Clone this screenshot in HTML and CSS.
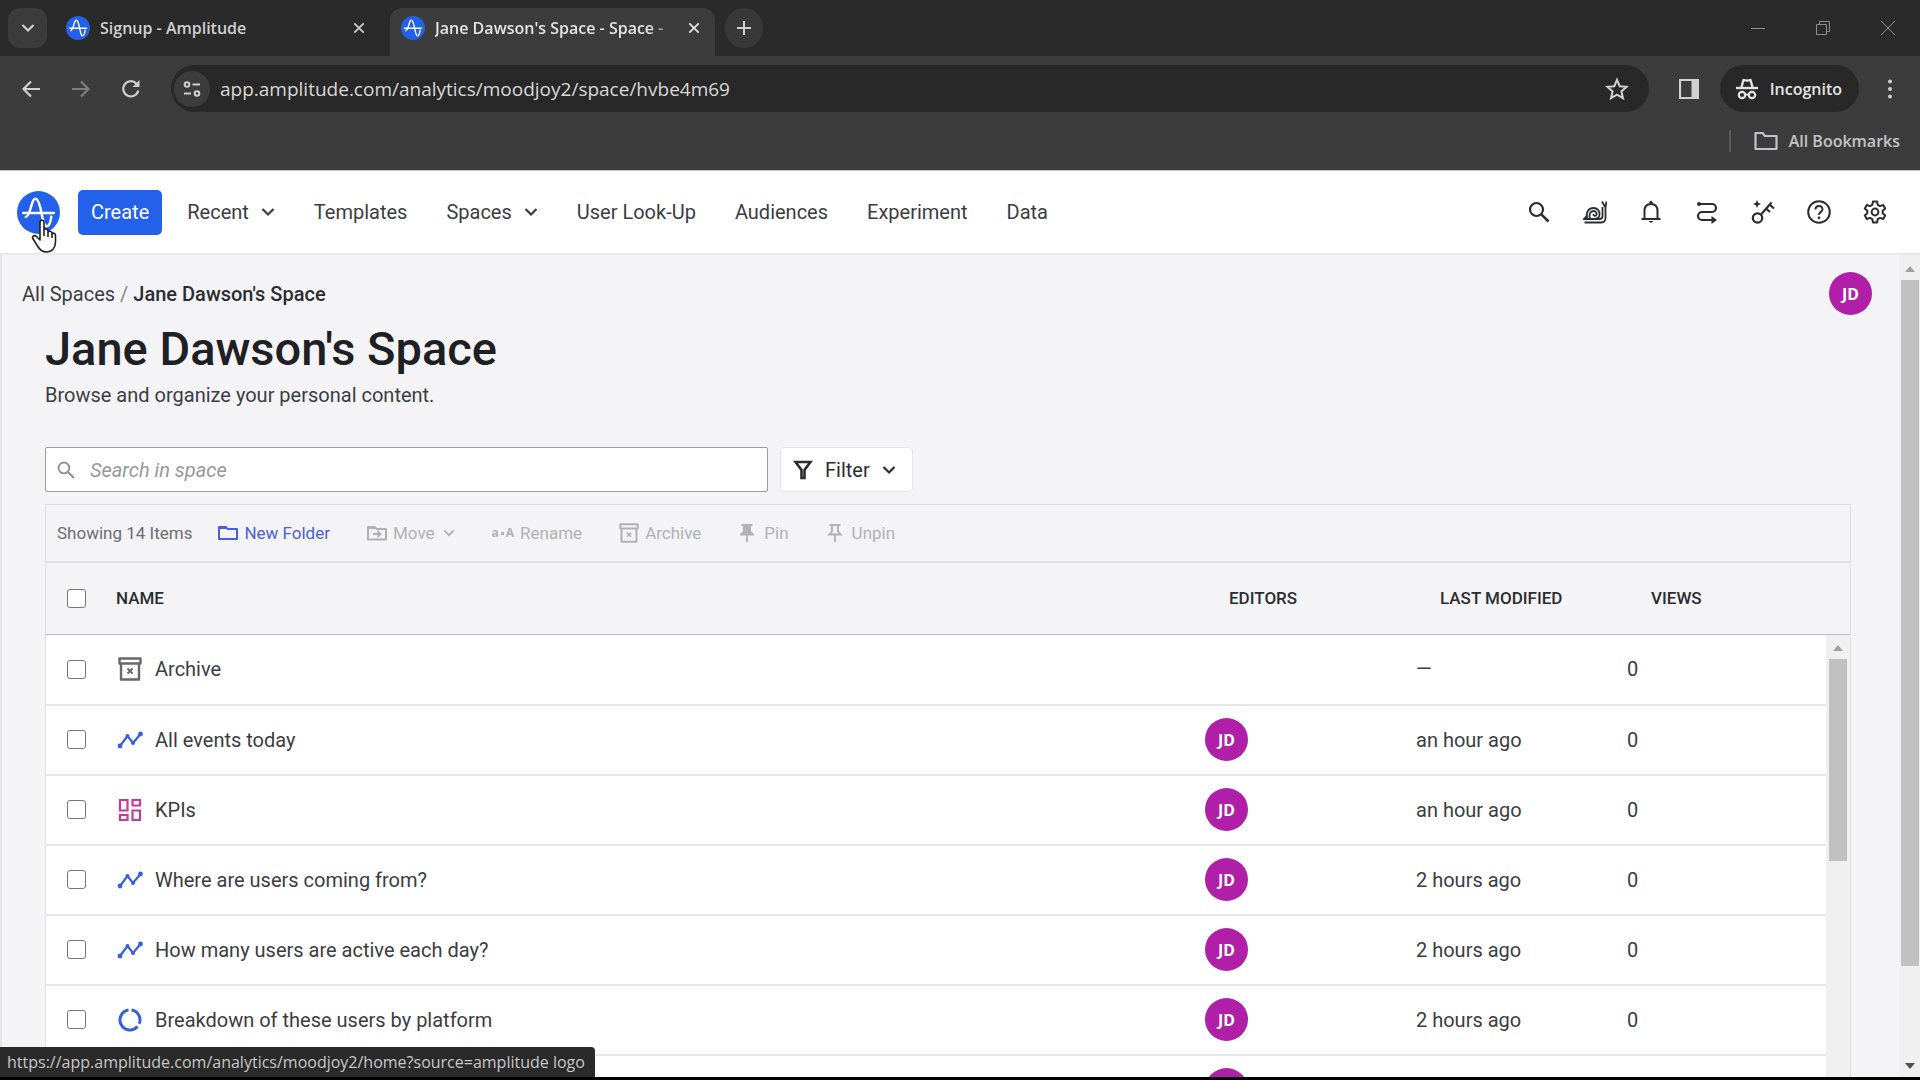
FILE: index.html
```html
<!DOCTYPE html>
<html lang="en">
<head>
<meta charset="utf-8">
<meta name="viewport" content="width=device-width, initial-scale=1">
<title>Jane Dawson's Space - Space</title>
<link rel="stylesheet" href="styles.css">
</head>
<body>
<svg class="sprite" aria-hidden="true">
  <symbol id="amp" viewBox="0 0 42 42">
    <circle cx="21" cy="21" r="21" fill="#2461eb"/>
    <path d="M6 21.5H36M8.500 25.500C11 25 12.500 20 14 14.500C15.300 9.500 16.500 7.500 18 7.500C20.500 7.500 22.500 14 24 22C25.500 30 27 34.500 29 34.500C31.500 34.500 33 29 33.500 25" fill="none" stroke="#fff" stroke-width="2.400" stroke-linecap="round"/>
  </symbol>
  <symbol id="chev" viewBox="0 0 14 14"><path d="M1.500 4L7 9.500L12.500 4" fill="none" stroke="currentColor" stroke-width="2.200"/></symbol>
  <symbol id="x" viewBox="0 0 14 14"><path d="M1.500 1.500L12.500 12.500M12.500 1.500L1.500 12.500" fill="none" stroke="currentColor" stroke-width="2"/></symbol>
  <symbol id="search" viewBox="0 0 24 24"><circle cx="9.500" cy="9.500" r="6.500" fill="none" stroke="currentColor" stroke-width="2.200"/><path d="M14.300 14.300L21.500 21.500" stroke="currentColor" stroke-width="2.600" fill="none"/></symbol>
  <symbol id="folder" viewBox="0 0 20 16"><path d="M1 14V2H8L9.500 4H19V14Z" fill="none" stroke="currentColor" stroke-width="2" stroke-linejoin="round"/><path d="M1 1.500H8L10 4H1Z" fill="currentColor"/></symbol>
  <symbol id="archive" viewBox="0 0 24 24"><path d="M1.500 1.500H22.500V6.500H1.500ZM3 6.500V22.500H21V6.500" fill="none" stroke="currentColor" stroke-width="2.400" stroke-linejoin="round"/><path d="M9.500 11.500L14.500 16.500M14.500 11.500L9.500 16.500" stroke="currentColor" stroke-width="2"/></symbol>
  <symbol id="line" viewBox="0 0 26 18"><path d="M3 15L10.500 5L16 12L23.500 3" fill="none" stroke="currentColor" stroke-width="2.200"/><circle cx="3" cy="15" r="2.400" fill="currentColor"/><circle cx="10.500" cy="5" r="2" fill="currentColor"/><circle cx="16" cy="12" r="2" fill="currentColor"/><circle cx="23.500" cy="3" r="2.400" fill="currentColor"/></symbol>
  <symbol id="dash" viewBox="0 0 24 24"><path d="M2 2H9.500V12.500H2ZM14.500 2H22V7.500H14.500ZM2 17H9.500V22H2ZM14.500 12.500H22V22H14.500Z" fill="none" stroke="currentColor" stroke-width="2.200"/></symbol>
  <symbol id="ring" viewBox="0 0 24 24"><path d="M10.500 2.100A10 10 0 1 0 19.500 18.600M13.500 2.100A10 10 0 0 1 21.200 15.800" fill="none" stroke="currentColor" stroke-width="3"/></symbol>
</svg>

<div class="browser">
  <div class="tabstrip">
    <button class="tab-search" aria-label="Search tabs"><svg class="i14"><use href="#chev"/></svg></button>
    <div class="tab">
      <svg class="favicon"><use href="#amp"/></svg><span class="tab-title">Signup - Amplitude</span>
      <button class="plain" aria-label="Close tab"><svg class="i12"><use href="#x"/></svg></button>
    </div>
    <div class="tab tab-active">
      <svg class="favicon"><use href="#amp"/></svg><span class="tab-title">Jane Dawson's Space - Space -</span>
      <button class="plain" aria-label="Close tab"><svg class="i12"><use href="#x"/></svg></button>
    </div>
    <button class="new-tab" aria-label="New tab"><svg class="i14" viewBox="0 0 14 14"><path d="M7 0V14M0 7H14" stroke="currentColor" stroke-width="2"/></svg></button>
    <div class="window-controls">
      <button class="plain" aria-label="Minimize"><svg class="i16" viewBox="0 0 16 16"><path d="M1 8.500H15" stroke="currentColor"/></svg></button>
      <button class="plain" aria-label="Restore"><svg class="i16" viewBox="0 0 16 16"><path d="M1.500 4.500H11.500V14.500H1.500ZM4.500 4.500V1.500H14.500V11.500H11.500" fill="none" stroke="currentColor"/></svg></button>
      <button class="plain" aria-label="Close"><svg class="i16" viewBox="0 0 16 16"><path d="M1 1L15 15M15 1L1 15" stroke="currentColor"/></svg></button>
    </div>
  </div>
  <div class="toolbar">
    <button class="plain" aria-label="Back"><svg class="i20" viewBox="0 0 20 20"><path d="M19 10H3M10 2.500L2.500 10L10 17.500" fill="none" stroke="currentColor" stroke-width="2.200"/></svg></button>
    <button class="plain dim" aria-label="Forward"><svg class="i20" viewBox="0 0 20 20"><path d="M1 10H17M10 2.500L17.500 10L10 17.500" fill="none" stroke="currentColor" stroke-width="2.200"/></svg></button>
    <button class="plain" aria-label="Reload"><svg class="i20" viewBox="0 0 20 20"><path d="M17.300 11.500A7.600 7.600 0 1 1 15.500 4.700L17 6.300" fill="none" stroke="currentColor" stroke-width="2.200"/><path d="M18.500 1V8H11.500Z" fill="currentColor"/></svg></button>
    <div class="omnibox">
      <button class="site" aria-label="Site information"><svg class="i18" viewBox="0 0 18 18"><path d="M9.500 4.500H17M1 13.500H8" stroke="currentColor" stroke-width="2.200"/><circle cx="4" cy="4.500" r="2.300" fill="none" stroke="currentColor" stroke-width="2"/><circle cx="14" cy="13.500" r="2.300" fill="none" stroke="currentColor" stroke-width="2"/></svg></button>
      <input class="url" type="text" aria-label="Address" value="app.amplitude.com/analytics/moodjoy2/space/hvbe4m69">
      <button class="plain" aria-label="Bookmark"><svg class="i24" viewBox="0 0 24 24"><path d="M12 2.800L14.700 9.200L21.600 9.800L16.400 14.400L18 21.200L12 17.600L6 21.200L7.600 14.400L2.400 9.800L9.300 9.200Z" fill="none" stroke="currentColor" stroke-width="2"/></svg></button>
    </div>
    <button class="plain" aria-label="Side panel"><svg class="i20" viewBox="0 0 20 20"><path d="M1 1H19V19H1Z" fill="none" stroke="currentColor" stroke-width="2.200"/><path d="M12.500 1H19V19H12.500Z" fill="currentColor"/></svg></button>
    <button class="incognito"><svg class="i22" viewBox="0 0 22 22"><path d="M0 10H22" stroke="currentColor" stroke-width="2.400"/><path d="M5.500 9L7.500 2L11 2.600L14.500 2L16.500 9" fill="none" stroke="currentColor" stroke-width="2.400"/><circle cx="6" cy="17" r="3.200" fill="none" stroke="currentColor" stroke-width="2.200"/><circle cx="16" cy="17" r="3.200" fill="none" stroke="currentColor" stroke-width="2.200"/><path d="M9 16.500H13" stroke="currentColor" stroke-width="2"/></svg>Incognito</button>
    <button class="plain" aria-label="Browser menu"><svg class="i20" viewBox="0 0 20 20" fill="currentColor"><circle cx="10" cy="2.500" r="2"/><circle cx="10" cy="10" r="2"/><circle cx="10" cy="17.500" r="2"/></svg></button>
  </div>
  <div class="bookmarks">
    <span class="divider"></span>
    <button class="plain bookmark"><svg class="bm-folder" viewBox="0 0 24 20"><path d="M1.500 18V2H8.500L11 5H22.500V18Z" fill="none" stroke="currentColor" stroke-width="2.200" stroke-linejoin="round"/></svg>All Bookmarks</button>
  </div>
</div>

<header class="app-header">
  <a class="logo" href="#" aria-label="Amplitude home">
    <svg class="logo-mark"><use href="#amp"/></svg>
    <svg class="cursor" viewBox="0 0 26 34" aria-hidden="true"><path d="M9 20V3.500C9 .5 13 .5 13 3.500V11C13 9.500 17 9.500 17 12V13C17.500 11.500 21 12 21 14V15C21.500 13.500 24.500 14 24.500 16.500V23C24.500 29 21 33 15.500 33C10.500 33 8.500 30.500 6.500 27L1.800 19.500C.8 17.500 3.500 15.500 5.500 17.500L9 21Z" fill="#fff" stroke="#222" stroke-width="1.600" stroke-linejoin="round"/><path d="M13 11V17M17 13V18M21 15V19" stroke="#222" stroke-width="1.600"/></svg>
  </a>
  <button class="create">Create</button>
  <nav class="nav">
    <button class="nav-item">Recent <svg class="i14"><use href="#chev"/></svg></button>
    <a class="nav-item" href="#">Templates</a>
    <button class="nav-item">Spaces <svg class="i14"><use href="#chev"/></svg></button>
    <a class="nav-item" href="#">User Look-Up</a>
    <a class="nav-item" href="#">Audiences</a>
    <a class="nav-item" href="#">Experiment</a>
    <a class="nav-item" href="#">Data</a>
  </nav>
  <div class="tools">
    <button class="plain" aria-label="Search"><svg class="i24"><use href="#search"/></svg></button>
    <button class="plain" aria-label="Snail"><svg class="i24" viewBox="0 0 24 24"><path d="M1.500 22.500H18C21 22.500 22.500 21 22.500 18V7.500L19 1.500M22.500 7L23.500 1.500M19.500 7V16C19.500 18.500 18 19 16.500 19H1L3.500 16.500" fill="none" stroke="currentColor" stroke-width="1.800"/><path d="M4 18.500C2.500 12 6 8 10.500 8C14.500 8 16.800 11 16.500 14.500C16.300 17 14.500 18.500 12.500 18.500M7 18.500C5.500 14 7.500 11 10.500 11C13 11 14 13 13.500 14.500C13 16.500 10 16 10.500 14" fill="none" stroke="currentColor" stroke-width="1.800"/></svg></button>
    <button class="plain" aria-label="Notifications"><svg class="i24" viewBox="0 0 24 24"><path d="M5.500 18.500V11C5.500 6.500 8 4 12 4S18.500 6.500 18.500 11V18.500" fill="none" stroke="currentColor" stroke-width="2"/><path d="M2.500 19H21.500" stroke="currentColor" stroke-width="2"/><circle cx="12" cy="2.500" r="1.700" fill="currentColor"/><path d="M9.500 21H14.500Q12 24.500 9.500 21Z" fill="currentColor"/></svg></button>
    <button class="plain" aria-label="Journeys"><svg class="i24" viewBox="0 0 24 24"><path d="M3.500 4H17A4 4 0 0 1 17 12H7A4 4 0 0 0 7 20H18" fill="none" stroke="currentColor" stroke-width="2.200"/><circle cx="4" cy="4" r="2" fill="currentColor"/><path d="M16.500 16L22 20L16.500 24Z" fill="currentColor"/></svg></button>
    <button class="plain" aria-label="Keys"><svg class="i24" viewBox="0 0 24 24"><circle cx="6.500" cy="18" r="4.700" fill="none" stroke="currentColor" stroke-width="2.200"/><path d="M10 14.500L20.500 2.500M15 8.500L19 12M18.500 4.500L23 8.500" fill="none" stroke="currentColor" stroke-width="2.200"/><path d="M6 0L7.200 2.800L10 4L7.200 5.200L6 8L4.800 5.200L2 4L4.800 2.800Z" fill="currentColor"/></svg></button>
    <button class="plain" aria-label="Help"><svg class="i24" viewBox="0 0 24 24"><circle cx="12" cy="12" r="10.800" fill="none" stroke="currentColor" stroke-width="2"/><path d="M8.500 9.500C8.500 4.800 15.500 4.800 15.500 9.200C15.500 11.800 12 12 12 14.800" fill="none" stroke="currentColor" stroke-width="2"/><circle cx="12" cy="17.800" r="1.400" fill="currentColor"/></svg></button>
    <button class="plain" aria-label="Settings"><svg class="i24" viewBox="0 0 24 24"><circle cx="12" cy="12" r="3.400" fill="none" stroke="currentColor" stroke-width="2"/><path d="M10 1.500H14L14.700 4.800L17 6.100L20.200 5L22.200 8.500L19.700 10.800V13.200L22.200 15.500L20.200 19L17 17.900L14.700 19.200L14 22.500H10L9.300 19.200L7 17.900L3.800 19L1.800 15.500L4.300 13.200V10.800L1.800 8.500L3.800 5L7 6.100L9.300 4.800Z" fill="none" stroke="currentColor" stroke-width="2" stroke-linejoin="round"/></svg></button>
  </div>
</header>

<div class="page">
  <main class="content">
    <div class="crumb-row">
      <div class="crumbs"><a href="#">All Spaces</a> <span class="slash">/</span> <span class="current">Jane Dawson's Space</span></div>
      <span class="avatar">JD</span>
    </div>
    <h1>Jane Dawson's Space</h1>
    <p class="subtitle">Browse and organize your personal content.</p>
    <div class="controls">
      <label class="search-box"><svg class="i20"><use href="#search"/></svg><input type="text" placeholder="Search in space" aria-label="Search in space"></label>
      <button class="filter"><svg class="i20" viewBox="0 0 20 20"><path d="M2.500 2H17.500L11.500 10V18H8.500V10Z" fill="none" stroke="currentColor" stroke-width="2.600"/></svg>Filter<svg class="i14"><use href="#chev"/></svg></button>
    </div>

    <section class="card">
      <div class="actions">
        <span class="count">Showing 14 Items</span>
        <button class="action action-new"><svg class="act-folder"><use href="#folder"/></svg>New Folder</button>
        <button class="action" disabled><svg class="act-folder" viewBox="0 0 20 16"><path d="M1 14.500V2H8L9.500 4H19V14.500Z" fill="none" stroke="currentColor" stroke-width="2" stroke-linejoin="round"/><path d="M1 1.500H8L10 4H1Z" fill="currentColor"/><path d="M6 9H13M10.500 6L13.500 9L10.500 12" fill="none" stroke="currentColor" stroke-width="1.800"/></svg>Move<svg class="i12 move-chev"><use href="#chev"/></svg></button>
        <button class="action" disabled><span class="case-icon" aria-hidden="true">a<i></i>A</span>Rename</button>
        <button class="action" disabled><svg class="i20"><use href="#archive"/></svg>Archive</button>
        <button class="action pin" disabled><svg class="i18" viewBox="0 0 18 18"><path d="M3.500 0H14.500V2H13V7.500L16 10V11.500H2V10L5 7.500V2H3.500Z" fill="currentColor"/><path d="M9 11V18" stroke="currentColor" stroke-width="1.800"/></svg>Pin</button>
        <button class="action pin" disabled><svg class="i18" viewBox="0 0 18 18"><path d="M3.500 1H14.500M6 1V7.500L3.200 10.500H14.800L12 7.500V1M9 11V18" fill="none" stroke="currentColor" stroke-width="1.800"/></svg>Unpin</button>
      </div>
      <table class="grid grid-head">
        <thead><tr>
          <th class="c-check"><input type="checkbox" aria-label="Select all"></th>
          <th>NAME</th><th class="c-side">EDITORS</th><th class="c-side">LAST MODIFIED</th><th class="c-views">VIEWS</th>
        </tr></thead>
      </table>
      <div class="rows">
        <table class="grid grid-body">
          <tbody>
            <tr><td class="c-check"><input type="checkbox" aria-label="Select Archive"></td><td><a class="item" href="#"><svg class="i26 grey"><use href="#archive"/></svg>Archive</a></td><td class="c-side"></td><td class="c-side">—</td><td class="c-views">0</td></tr>
            <tr><td class="c-check"><input type="checkbox" aria-label="Select All events today"></td><td><a class="item" href="#"><svg class="i26 blue"><use href="#line"/></svg>All events today</a></td><td class="c-side"><span class="avatar">JD</span></td><td class="c-side">an hour ago</td><td class="c-views">0</td></tr>
            <tr><td class="c-check"><input type="checkbox" aria-label="Select KPIs"></td><td><a class="item" href="#"><svg class="i26 pink"><use href="#dash"/></svg>KPIs</a></td><td class="c-side"><span class="avatar">JD</span></td><td class="c-side">an hour ago</td><td class="c-views">0</td></tr>
            <tr><td class="c-check"><input type="checkbox" aria-label="Select Where are users coming from?"></td><td><a class="item" href="#"><svg class="i26 blue"><use href="#line"/></svg>Where are users coming from?</a></td><td class="c-side"><span class="avatar">JD</span></td><td class="c-side">2 hours ago</td><td class="c-views">0</td></tr>
            <tr><td class="c-check"><input type="checkbox" aria-label="Select How many users are active each day?"></td><td><a class="item" href="#"><svg class="i26 blue"><use href="#line"/></svg>How many users are active each day?</a></td><td class="c-side"><span class="avatar">JD</span></td><td class="c-side">2 hours ago</td><td class="c-views">0</td></tr>
            <tr><td class="c-check"><input type="checkbox" aria-label="Select Breakdown of these users by platform"></td><td><a class="item" href="#"><svg class="i26 blue"><use href="#ring"/></svg>Breakdown of these users by platform</a></td><td class="c-side"><span class="avatar">JD</span></td><td class="c-side">2 hours ago</td><td class="c-views">0</td></tr>
            <tr><td class="c-check"></td><td></td><td class="c-side"><span class="avatar"></span></td><td class="c-side"></td><td class="c-views"></td></tr>
          </tbody>
        </table>
        <div class="scroll scroll-inner" aria-hidden="true"><i class="up"></i><span class="thumb"></span></div>
      </div>
    </section>
  </main>
  <div class="scroll scroll-page" aria-hidden="true"><i class="up"></i><span class="thumb"></span><i class="down"></i></div>
</div>
<div class="status">https://app.amplitude.com/analytics/moodjoy2/home?source=amplitude logo</div>
</body>
</html>
```
FILE: styles.css
```css
* { box-sizing: border-box; }

body {
  margin: 0;
  height: 100vh;
  padding-bottom: 3px;
  display: flex;
  flex-direction: column;
  overflow: hidden;
  position: relative;
  background: #000;
  color: #3b3d42;
  font: 20px/24px Roboto, "Liberation Sans", sans-serif;
}

button, input { font: inherit; color: inherit; }
button { border: 0; background: none; padding: 0; display: flex; align-items: center; }
a { color: inherit; text-decoration: none; }
svg { display: block; flex: none; }

.sprite { position: absolute; width: 0; height: 0; }
.i12 { width: 12px; height: 12px; }
.i14 { width: 14px; height: 14px; }
.i16 { width: 16px; height: 16px; }
.i18 { width: 18px; height: 18px; }
.i20 { width: 20px; height: 20px; }
.i22 { width: 22px; height: 22px; }
.i24 { width: 24px; height: 24px; }
.i26 { width: 26px; height: 24px; }

/* Browser window */
.browser {
  flex: none;
  background: #3c3c3c;
  color: #d0d0d0;
  border-bottom: 1px solid #c4c4c4;
  font: 600 16px/24px "Open Sans", "Noto Sans", sans-serif;
}
.tabstrip { display: flex; height: 56px; padding: 8px 24px 0 8px; background: #2a2a2a; }
.tab-search { width: 39px; height: 40px; border-radius: 12px; background: #3b3b3b; justify-content: center; }
.tab { display: flex; align-items: center; gap: 10px; width: 325px; padding: 0 15px 8px 11px; }
.tab:not(.tab-active) { width: 343px; padding: 0 25px 8px 19px; }
.tab-active { background: #3c3c3c; border-radius: 12px 12px 0 0; color: #e4e4e4; }
.tab-title {
  flex: 1;
  min-width: 0;
  overflow: hidden;
  white-space: nowrap;
}
.tab-active .tab-title { -webkit-mask-image: linear-gradient(90deg, #000 88%, transparent); mask-image: linear-gradient(90deg, #000 88%, transparent); }
.favicon { width: 24px; height: 24px; }
.new-tab { width: 38px; height: 40px; margin-left: 10px; border-radius: 50%; background: #383838; justify-content: center; }
.window-controls { display: flex; gap: 49px; margin-left: auto; padding-bottom: 8px; color: #8f8f8f; }

.toolbar { display: flex; align-items: center; gap: 30px; padding: 9px 20px 0 21px; }
.dim { color: #7d7d7d; }
.omnibox {
  flex: 1;
  min-width: 0;
  display: flex;
  align-items: center;
  height: 47px;
  padding: 0 20px 0 3px;
  border-radius: 24px;
  background: #282828;
}
.site { width: 36px; height: 36px; border-radius: 50%; background: #3c3c3c; justify-content: center; flex: none; }
.url { flex: 1; min-width: 0; border: 0; padding: 0 10px; background: none; outline: 0; font-size: 19px; font-weight: 400; color: #d8d8d8; }
.incognito { gap: 12px; height: 47px; padding: 0 17px 0 16px; margin: 0 -9px; border-radius: 24px; background: #282828; color: #e4e4e4; }
.bookmarks { display: flex; align-items: center; justify-content: flex-end; gap: 23px; height: 58px; padding-right: 20px; }
.bookmark { gap: 11px; color: #c4c4c8; }
.bm-folder { width: 24px; height: 20px; }
.divider { width: 2px; height: 22px; background: #5a5a5a; }

/* Application header */
.app-header {
  flex: none;
  display: flex;
  align-items: center;
  height: 84px;
  padding: 0 33px 0 17px;
  background: #fff;
  border-bottom: 2px solid #e9e9eb;
}
.logo { position: relative; margin-right: 18px; }
.logo-mark { width: 43px; height: 43px; }
.cursor { position: absolute; left: 14px; top: 28px; width: 26px; height: 34px; z-index: 2; }
.create { height: 45px; padding: 0 13px; border-radius: 5px; background: #2461eb; color: #fff; margin-right: 25px; }
.nav { display: flex; gap: 39px; }
.nav-item { display: flex; align-items: center; gap: 12px; white-space: nowrap; }
.tools { display: flex; gap: 32px; margin-left: auto; color: #2b2d31; }

/* Page body */
.page { flex: 1; min-height: 0; display: flex; background: #f4f4f7; border-left: 2px solid #e6e6e9; }
.content { flex: 1; min-width: 0; padding: 17px 27px 0 20px; display: flex; flex-direction: column; }
.crumb-row { display: flex; align-items: center; justify-content: space-between; }
.current { font-weight: 500; color: #2b2d31; }
.slash { color: #85878c; }
.avatar {
  display: flex;
  align-items: center;
  justify-content: center;
  width: 43px;
  height: 43px;
  border-radius: 50%;
  background: #b01fa8;
  color: #fff;
  font: 700 16px/24px "Noto Sans", "Open Sans", sans-serif;
}
h1, .subtitle, .controls, .card { margin-left: 23px; }
h1 { margin-top: 6px; margin-bottom: 0; font: 500 47px/56px Roboto, sans-serif; color: #1e2024; }
.subtitle { margin-top: 6px; margin-bottom: 40px; }
.controls { display: flex; gap: 12px; }
.search-box {
  display: flex;
  align-items: center;
  gap: 14px;
  width: 723px;
  height: 45px;
  padding: 0 10px;
  border: 1px solid #9c9da1;
  border-radius: 2px;
  background: #fff;
  color: #8e9095;
}
.search-box input { flex: 1; min-width: 0; border: 0; padding: 0; outline: 0; background: none; }
.search-box input::placeholder { color: #96989d; font-style: italic; opacity: 1; }
.filter { gap: 12px; height: 45px; padding: 0 16px 0 12px; border: 1px solid #e6e6e9; border-radius: 4px; background: #fff; color: #2b2d31; }

.card {
  flex: 1;
  min-height: 0;
  display: flex;
  flex-direction: column;
  margin-top: 12px;
  border: 1px solid #dfdfe3;
  border-bottom: 0;
  margin-right: 21px;
}
.actions { display: flex; align-items: center; gap: 37px; height: 58px; padding-left: 11px; border-bottom: 2px solid #e1e1e4; font-size: 17px; }
.count { color: #6b6d72; margin-right: -11px; }
.action { gap: 6px; color: #b0b1b6; white-space: nowrap; }
.action-new { color: #4a5fe0; }
.pin { gap: 8px; }
.act-folder { width: 20px; height: 16px; }
.move-chev { margin-left: 2px; }
.case-icon { display: flex; align-items: center; gap: 2px; font: 700 12px/16px "Noto Sans", sans-serif; }
.case-icon i { width: 3px; height: 3px; background: currentColor; }

.grid { width: 100%; border-collapse: collapse; table-layout: fixed; text-align: left; }
.grid th, .grid td { padding: 0; }
.grid-head th { height: 71px; font-size: 17px; font-weight: 500; color: #2b2d31; }
.grid-head { border-bottom: 1px solid #bcbcc0; }
.c-check { width: 70px; }
.c-side { width: 211px; }
.c-views { width: 199px; }
.grid input {
  appearance: none;
  display: block;
  width: 19px;
  height: 19px;
  margin: 0 0 0 21px;
  border: 1px solid #77787c;
  border-radius: 3px;
  background: #fff;
}
.rows { flex: 1; min-height: 0; display: flex; overflow: hidden; background: #fff; }
.grid-body { flex: 1; align-self: flex-start; }
.grid-body tr { height: 70px; border-bottom: 2px solid #e6e6e8; }
.item { display: flex; align-items: center; gap: 12px; padding-left: 1px; }
.grey { color: #66686d; }
.blue { color: #3560d8; }
.pink { color: #c73a96; }

/* Scroll bars */
.scroll { flex: none; display: flex; flex-direction: column; align-items: center; background: #f0f0f1; }
.scroll-inner { width: 24px; padding-top: 10px; }
.scroll-page { width: 21px; padding: 11px 0 8px; }
.thumb { width: 18px; background: #c1c1c1; }
.scroll-inner .thumb { height: 202px; margin-top: 8px; }
.scroll-page .thumb { height: 686px; margin-top: 8px; }
.up, .down { border: 5px solid transparent; }
.up { border-top: 0; border-bottom: 6px solid #a0a0a0; }
.down { border-bottom: 0; border-top: 6px solid #505050; margin-top: auto; }

/* Link address shown on hover */
.status {
  position: absolute;
  left: 0;
  bottom: 3px;
  padding: 3px 10px 3px 7px;
  border-radius: 0 4px 0 0;
  background: #2a2a2a;
  color: #c8c8c8;
  font: 16px/24px "Open Sans", "Noto Sans", sans-serif;
}
```
